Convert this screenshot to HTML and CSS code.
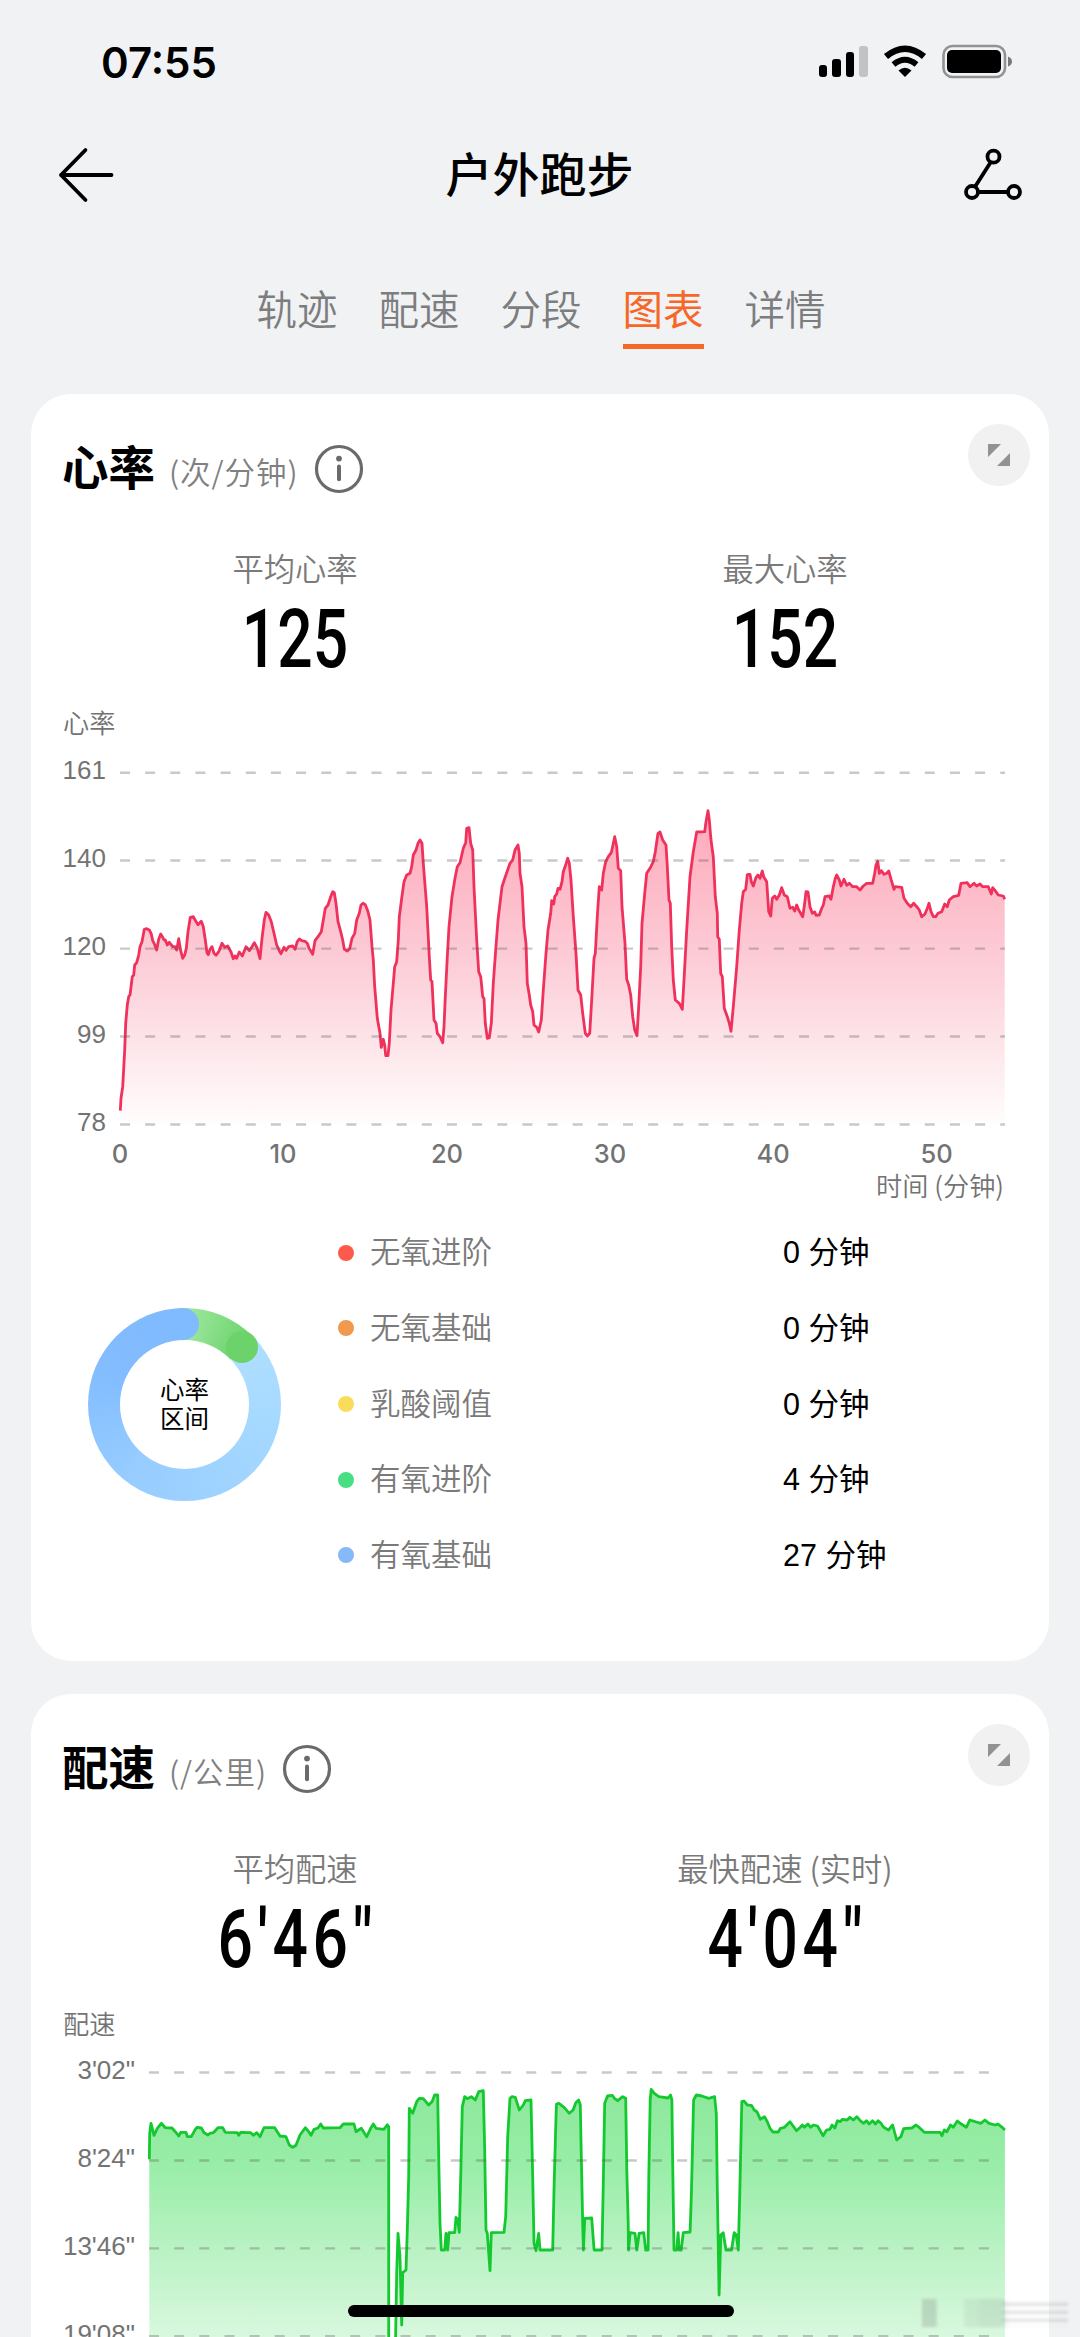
FILE: index.html
```html
<!DOCTYPE html>
<html lang="zh-CN">
<head>
    <meta charset="UTF-8">
    <title>户外跑步</title>
    <link rel="stylesheet" href="styles.css">
</head>
<body>
    <!-- Status bar -->
    <div class="status-bar">
        <span class="time">07:55</span>
        <svg class="status-icons" width="200" height="40" viewBox="816 42 200 40">
            <rect x="819" y="65" width="8" height="12" rx="3"/>
            <rect x="832" y="59" width="9" height="18" rx="3"/>
            <rect x="846" y="52" width="8" height="25" rx="3"/>
            <rect x="859" y="46" width="9" height="31" rx="3" fill="#c2c3c5"/>
            <path d="M905 77l-6.500-6.500q6.500-5.500 13 0z"/>
            <path d="M893.500 64.500q11.500-9.500 23 0" fill="none" stroke="#000" stroke-width="6"/>
            <path d="M886 56.500q19-15.500 38 0" fill="none" stroke="#000" stroke-width="6.500"/>
            <rect x="943.500" y="46" width="61.500" height="31" rx="9" fill="none" stroke="#919294" stroke-width="2.600"/>
            <rect x="947" y="50" width="54" height="23" rx="5"/>
            <path d="M1008 56.500q4 1.500 4 5t-4 5z" fill="#77787a"/>
        </svg>
    </div>

    <!-- Page header -->
    <div class="header">
        <svg class="icon-back" width="56" height="56" viewBox="0 0 56 56">
            <path d="M27.500 3L3 28l24.500 25M3 28h50.500"/>
        </svg>
        <h1>户外跑步</h1>
        <svg class="icon-share" width="62" height="56" viewBox="0 0 62 56">
            <circle cx="32.500" cy="9.700" r="6"/>
            <circle cx="11" cy="45" r="6"/>
            <circle cx="53" cy="45" r="6"/>
            <path d="M29.500 15.500L14.500 39M17 45h30"/>
        </svg>
    </div>

    <div class="tabs">
        <span class="tab">轨迹</span>
        <span class="tab">配速</span>
        <span class="tab">分段</span>
        <span class="tab active">图表</span>
        <span class="tab">详情</span>
    </div>

    <!-- Heart rate -->
    <div class="card heart">
        <div class="card-head">
            <h2>心率</h2>
            <span class="unit">(次/分钟)</span>
            <svg class="info" width="50" height="50" viewBox="0 0 50 50">
                <circle cx="25" cy="25" r="22.500"/>
                <circle class="dot" cx="25" cy="14.600" r="2.900"/>
                <path d="M25 22.500v12.800"/>
            </svg>
            <div class="expand">
                <svg width="22" height="22" viewBox="0 0 22 22"><path d="M0 0h13L0 13zM22 9v13H9z"/></svg>
            </div>
        </div>
        <div class="stats">
            <div class="stat">
                <div class="stat-label">平均心率</div>
                <div class="stat-value">125</div>
            </div>
            <div class="stat">
                <div class="stat-label">最大心率</div>
                <div class="stat-value">152</div>
            </div>
        </div>
        <svg class="chart" width="980" height="510" viewBox="50 700 980 510">
            <defs>
                <linearGradient id="heart-fill" gradientUnits="userSpaceOnUse" x1="0" y1="811" x2="0" y2="1125">
                    <stop offset="0" stop-color="#ffa9ba"/>
                    <stop offset="0.450" stop-color="#fccad5"/>
                    <stop offset="0.720" stop-color="#fde3e8"/>
                    <stop offset="1" stop-color="#fffdfd"/>
                </linearGradient>
            </defs>
            <text x="63" y="733" class="cjk">心率</text>
            <g id="heart-series" class="series"></g>
            <path class="grid" d="M120 772.700h885M120 860.500h885M120 948.600h885M120 1036.500h885M120 1124.500h885"/>
            <g class="y-labels">
                <text x="106" y="779">161</text>
                <text x="106" y="867">140</text>
                <text x="106" y="955">120</text>
                <text x="106" y="1043">99</text>
                <text x="106" y="1131">78</text>
            </g>
            <g class="x-labels">
                <text x="120" y="1163">0</text>
                <text x="283" y="1163">10</text>
                <text x="447" y="1163">20</text>
                <text x="610" y="1163">30</text>
                <text x="773" y="1163">40</text>
                <text x="936.500" y="1163">50</text>
            </g>
            <text x="1004" y="1196" class="cjk end">时间 (分钟)</text>
        </svg>
        <div class="zones">
            <div class="ring">
                <span class="cap cap-green"></span>
                <span class="cap cap-blue"></span>
                <div class="ring-text">心率<br>区间</div>
            </div>
            <div class="zone-list">
                <div class="zone"><i class="red"></i><span>无氧进阶</span><b>0 分钟</b></div>
                <div class="zone"><i class="orange"></i><span>无氧基础</span><b>0 分钟</b></div>
                <div class="zone"><i class="yellow"></i><span>乳酸阈值</span><b>0 分钟</b></div>
                <div class="zone"><i class="green"></i><span>有氧进阶</span><b>4 分钟</b></div>
                <div class="zone"><i class="blue"></i><span>有氧基础</span><b>27 分钟</b></div>
            </div>
        </div>
    </div>

    <!-- Pace -->
    <div class="card pace">
        <div class="card-head">
            <h2>配速</h2>
            <span class="unit">(/公里)</span>
            <svg class="info" width="50" height="50" viewBox="0 0 50 50">
                <circle cx="25" cy="25" r="22.500"/>
                <circle class="dot" cx="25" cy="14.600" r="2.900"/>
                <path d="M25 22.500v12.800"/>
            </svg>
            <div class="expand">
                <svg width="22" height="22" viewBox="0 0 22 22"><path d="M0 0h13L0 13zM22 9v13H9z"/></svg>
            </div>
        </div>
        <div class="stats">
            <div class="stat">
                <div class="stat-label">平均配速</div>
                <div class="stat-value">6'46"</div>
            </div>
            <div class="stat">
                <div class="stat-label">最快配速 (实时)</div>
                <div class="stat-value">4'04"</div>
            </div>
        </div>
        <svg class="chart" width="980" height="337" viewBox="50 2000 980 337">
            <defs>
                <linearGradient id="pace-fill" gradientUnits="userSpaceOnUse" x1="0" y1="2090" x2="0" y2="2425">
                    <stop offset="0" stop-color="#8ce89b"/>
                    <stop offset="0.220" stop-color="#98eda7"/>
                    <stop offset="0.480" stop-color="#baf2c4"/>
                    <stop offset="0.740" stop-color="#d9f8de"/>
                    <stop offset="1" stop-color="#fff"/>
                </linearGradient>
            </defs>
            <text x="63" y="2034" class="cjk">配速</text>
            <g id="pace-series" class="series"></g>
            <path class="grid" d="M149 2072.500h850M149 2160.500h850M149 2248.400h850M149 2336.300h850"/>
            <g class="y-labels">
                <text x="135" y="2079">3'02"</text>
                <text x="135" y="2167">8'24"</text>
                <text x="135" y="2255">13'46"</text>
                <text x="135" y="2343">19'08"</text>
            </g>
        </svg>
    </div>

    <div class="watermark"></div>
    <div class="home-indicator"></div>
    <script src="charts.js"></script>
</body>
</html>
```
FILE: styles.css
```css
* {
    box-sizing: border-box;
}

body {
    margin: 0;
    height: 2337px;
    overflow: hidden;
    position: relative;
    background-color: #f1f2f4;
    color: #000;
    font-family: "Noto Sans CJK SC", sans-serif;
}

h1, h2 {
    margin: 0;
}

/* Top of the page */
.status-bar {
    display: flex;
    justify-content: space-between;
    align-items: center;
    height: 124px;
    padding: 0 64px 0 101px;
}

.time {
    font-family: Inter, sans-serif;
    font-size: 42px;
    font-weight: 600;
}

.header {
    display: flex;
    justify-content: space-between;
    align-items: center;
    height: 102px;
    padding: 0 57px 0 58px;
}

.header h1 {
    padding: 0 0 7px 4px;
    font-size: 47px;
    line-height: 60px;
    font-weight: 500;
}

.icon-back, .icon-share {
    fill: none;
    stroke: #000;
    stroke-width: 3.8;
    stroke-linejoin: round;
    stroke-linecap: round;
}

.tabs {
    display: flex;
    justify-content: center;
    gap: 41px;
    height: 168px;
    padding: 54px 0 0 2px;
}

.tab {
    height: 69px;
    padding-top: 2px;
    font-size: 40.5px;
    line-height: 52px;
    font-weight: 350;
    color: #7c7d7f;
}

.tab.active {
    color: #f5682a;
    font-weight: 400;
    border-bottom: 5px solid #f5682a;
}

/* Cards */
.card {
    width: 1018px;
    margin: 0 31px 33px;
    padding: 30px 19px 0;
    border-radius: 40px;
    background-color: #fff;
}

.heart {
    height: 1267px;
}

.pace {
    margin-bottom: 0;
    border-radius: 40px 40px 0 0;
}

.card-head {
    display: flex;
    align-items: flex-start;
    height: 124px;
    padding-left: 12px;
}

.card-head h2 {
    margin-top: 11px;
    font-size: 46.5px;
    line-height: 60px;
    font-weight: 700;
}

.unit {
    margin: 26px 15px 0 14px;
    font-size: 30.5px;
    line-height: 42px;
    font-weight: 350;
    letter-spacing: 1px;
    color: #808080;
}

.info {
    margin-top: 20px;
    fill: none;
    stroke: #6a6a6a;
    stroke-width: 3.2;
    stroke-linecap: round;
}

.info path {
    stroke-width: 4;
}

.info .dot {
    fill: #6a6a6a;
    stroke: none;
}

.expand {
    display: flex;
    justify-content: center;
    align-items: center;
    width: 62px;
    height: 62px;
    margin-left: auto;
    border-radius: 50%;
    background-color: #f1f1f1;
}

.expand svg {
    fill: #929292;
}

.stats {
    display: flex;
    height: 152px;
}

.stat {
    flex: 1;
    text-align: center;
}

.stat-label {
    height: 46px;
    font-size: 31.3px;
    line-height: 40px;
    font-weight: 350;
    color: #7a7a7a;
}

.stat-value {
    font-family: Roboto, sans-serif;
    font-size: 81px;
    line-height: 92px;
    font-weight: 500;
    transform: scaleX(0.77);
}

.pace .stat-value {
    padding-left: 6px;
    letter-spacing: 6px;
}

/* Charts */
.chart {
    display: block;
}

.chart text {
    fill: #737373;
}

.cjk {
    font-size: 26.2px;
    font-weight: 350;
}

.end {
    text-anchor: end;
}

.y-labels {
    font-family: "Liberation Sans", sans-serif;
    font-size: 26px;
    text-anchor: end;
}

.x-labels {
    font-family: Inter, sans-serif;
    font-size: 25.5px;
    font-weight: 500;
    text-anchor: middle;
}

.grid {
    fill: none;
    stroke: rgba(90, 90, 90, 0.33);
    stroke-width: 2.4;
    stroke-dasharray: 10 15.15;
}

.series polyline {
    fill: none;
    stroke-width: 2.8;
    stroke-linejoin: round;
}

#heart-series polyline {
    stroke: #ef315b;
}

#heart-series polygon {
    fill: url(#heart-fill);
}

#pace-series polyline {
    stroke: #13c92f;
}

#pace-series polygon {
    fill: url(#pace-fill);
}

/* Heart rate zones */
.zones {
    display: flex;
    align-items: center;
    height: 388px;
    padding-left: 38px;
}

.ring {
    position: relative;
    display: flex;
    justify-content: center;
    align-items: center;
    width: 193px;
    height: 193px;
    border-radius: 50%;
    background: conic-gradient(#a0e8a1 0deg, #6bd36a 46deg, #aedfff 46deg, #a1d5ff 140deg, #96ccff 220deg, #83bdff 290deg, #80baff 360deg);
}

.ring-text {
    width: 129px;
    height: 129px;
    padding-top: 34px;
    border-radius: 50%;
    background-color: #fff;
    font-size: 24.5px;
    line-height: 29px;
    text-align: center;
}

.cap {
    position: absolute;
    width: 32px;
    height: 32px;
    border-radius: 50%;
}

.cap-green {
    top: 23.6px;
    left: 138.3px;
    background-color: #6bd36a;
}

.cap-blue {
    top: 0;
    left: 79px;
    background-color: #80baff;
}

.zone-list {
    margin-left: 57px;
}

.zone {
    display: flex;
    align-items: center;
    height: 75.7px;
    font-size: 30.5px;
}

.zone i {
    width: 16px;
    height: 16px;
    margin-right: 16px;
    border-radius: 50%;
}

.zone span {
    width: 413px;
    padding-bottom: 5px;
    font-weight: 350;
    color: #7a7a7a;
}

.zone b {
    padding-bottom: 5px;
    font-family: "Liberation Sans", "Noto Sans CJK SC", sans-serif;
    font-size: 30.5px;
    font-weight: 400;
}

.red { background-color: #fe5a4b; }
.orange { background-color: #f1994c; }
.yellow { background-color: #f9dc5c; }
.green { background-color: #47df81; }
.blue { background-color: #86b9f9; }

/* Overlays */
.home-indicator {
    position: absolute;
    left: 348px;
    bottom: 20px;
    width: 386px;
    height: 12px;
    border-radius: 6px;
    background-color: #000;
}

.watermark {
    position: absolute;
    right: 12px;
    bottom: 10px;
    width: 146px;
    height: 28px;
    background:
        repeating-linear-gradient(180deg, transparent 0 3px, rgba(130, 130, 135, 0.3) 5px, transparent 8px) right / 66px 28px no-repeat,
        linear-gradient(90deg, rgba(130, 140, 135, 0.3) 0 9%, transparent 11% 28%, rgba(130, 140, 135, 0.12) 30% 36%, rgba(130, 140, 135, 0.18) 42% 54%, transparent 60%);
    filter: blur(1.5px);
}
```
FILE: charts.js
```js
// Each point is "x,y"; three units are one pixel of the chart
const heart = `211,1112 213,1075 218,1040 224,930 227,850 232,795 236,770 240,765 247,710 251,705 254,675 260,668 266,645 270,620 276,605
283,568 290,566 298,570 304,582 308,602 314,614 320,630 326,598 332,582 338,592 342,600 346,600 352,615 358,607 368,620 375,620 380,630
386,596 392,632 398,655 404,645 409,625 414,575 421,532 430,530 437,543 444,554 454,544 460,560 466,600 471,638 475,644 480,628 486,620
492,640 498,646 506,635 516,610 524,622 533,618 543,636 550,656 555,648 560,655 568,636 577,648 588,620 598,632 606,620 613,608 622,625
630,656 636,595 643,540 648,517 656,525 664,545 672,580 680,615 688,632 693,641 702,622 708,631 716,620 728,618 735,628 742,605 748,597
755,602 765,604 772,610 777,625 782,632 788,643 795,602 804,590 814,575 820,540 826,505 834,495 842,470 848,455 853,458 858,490 864,545
872,575 878,600 883,628 892,633 899,626 906,595 914,580 920,540 928,520 933,495 939,490 946,494 953,512 960,540 966,620 970,660 974,740
982,835 990,880 994,922 1000,898 1004,915 1007,947 1014,947 1018,910 1023,810 1030,730 1034,680 1040,665 1045,600 1048,530 1055,475
1062,425 1070,405 1080,400 1085,380 1090,345 1098,330 1104,310 1110,300 1116,310 1120,370 1130,500 1138,650 1142,720 1146,725 1152,840
1158,850 1162,880 1170,890 1178,908 1182,860 1186,770 1192,650 1197,560 1206,470 1215,415 1222,380 1230,368 1240,325 1247,308 1250,265
1257,263 1262,310 1268,330 1272,440 1280,600 1286,695 1292,710 1298,770 1302,775 1306,850 1312,895 1318,893 1324,850 1330,730 1337,630
1344,540 1356,440 1366,410 1380,370 1388,360 1395,330 1404,315 1408,340 1410,400 1416,440 1422,560 1428,610 1432,730 1438,765 1442,795
1448,815 1452,855 1460,862 1466,876 1474,840 1480,750 1488,640 1494,570 1502,520`;

const heartSecondHalf = `35,482 41,492 44,470 50,462 54,445 60,448 66,425 70,395 78,372 83,355 88,370 93,420 100,530 108,640 114,750 122,765
128,820 136,880 142,888 149,880 155,780 162,655 166,640 172,530 178,440 185,450 190,400 197,365 205,350 214,338 219,315 224,290 230,320
235,385 242,392 246,500 255,610 260,718 266,735 272,765 278,830 284,870 291,887 296,800 302,680 306,550 314,460 320,400 330,385 340,365
346,335 354,280 360,276 368,300 378,315 382,380 387,480 391,490 395,620 400,720 406,780 418,790 427,808 432,720 440,570 450,410 460,335
470,276 494,275 498,245 504,212 508,240 513,300 520,350 526,470 532,520 533,590 538,598 542,700 547,710 553,805 562,830 568,850 573,874
580,800 590,680 598,570 605,490 610,455 617,448 622,404 630,403 634,425 640,438 648,412 654,405 660,415 667,393 671,410 680,425 686,515
692,528 697,475 704,468 710,478 718,465 725,443 733,465 742,470 750,505 758,502 764,513 770,495 776,510 788,530 794,490 798,455 804,456
810,500 817,520 824,516 828,526 838,525 845,505 850,495 855,470 868,468 873,478 880,440 886,415 890,405 898,420 903,438 912,418 920,436
928,430 938,440 950,440 960,450 970,438 980,430 998,430 1004,400 1008,375 1013,364 1018,400 1024,392 1032,403 1040,400 1046,393 1055,425
1062,448 1066,440 1085,442 1092,475 1102,490 1112,500 1121,490 1130,500 1138,510 1145,530 1155,522 1162,505 1167,490 1173,515 1180,530
1187,530 1194,520 1205,515 1214,492 1222,500 1228,480 1240,470 1256,466 1263,430 1282,428 1290,440 1302,430 1310,438 1320,432 1328,440
1345,440 1354,462 1358,443 1368,455 1375,465 1390,468 1394,478`;

const pace = `298,508 299,430 303,400 312,436 322,415 334,400 346,413 366,414 376,425 386,438 392,427 408,427 412,440 424,440 436,418 442,412
454,414 462,428 474,435 480,430 490,428 504,413 518,413 526,427 562,428 566,436 572,427 602,428 610,436 620,428 630,440 642,413 674,413
690,438 708,440 718,465 728,472 738,466 750,435 766,413 774,422 783,436 792,418 804,414 812,402 820,414 870,413 880,402 912,402 918,425
934,415 950,440 962,415 970,402 978,415 1002,418 1012,404 1016,410 1016,1200 1034,1200 1040,850 1044,730 1050,800 1055,1005 1058,848
1068,840 1072,720 1076,560 1078,355 1088,370 1100,335 1108,325 1120,326 1136,345 1146,335 1154,315 1163,315 1166,500 1170,700 1174,780
1184,780 1188,730 1193,780 1197,728 1214,728 1218,682 1223,688 1228,727 1232,560 1237,350 1244,320 1252,326 1264,320 1276,330 1286,305
1300,302 1304,480 1308,720 1312,730 1320,842 1324,728 1362,727 1367,680 1373,440 1380,325 1386,320 1396,322 1408,360 1420,345 1426,332
1443,330 1448,560 1452,760 1458,782 1466,730 1470,780 1508,780 1512,600 1518,380`;

const paceSecondHalf = `48,342 55,340 70,352 85,370 96,360 104,338 112,330 117,345 120,500 124,700 126,780 130,685 150,684 157,780 180,780
184,560 188,340 196,318 210,316 216,325 226,332 240,320 249,325 252,540 256,700 257,780 262,728 276,730 281,780 288,730 301,728 307,780
314,780 316,560 320,330 323,298 332,310 345,320 372,324 379,315 383,330 385,500 389,780 397,780 401,728 404,780 410,780 416,728 436,726
440,600 446,330 454,315 470,318 490,325 507,320 512,370 515,600 520,915 525,735 532,728 540,780 556,780 564,728 570,735 576,780 580,620
586,335 592,333 602,345 614,346 622,360 630,365 640,388 652,380 660,395 668,415 676,426 692,426 698,415 710,412 726,395 735,408 745,422
756,412 762,405 768,412 778,402 786,412 794,405 806,408 822,437 832,420 842,418 848,405 856,414 864,392 872,395 878,388 892,390 900,382
910,390 920,380 930,392 940,400 948,392 956,402 966,392 974,402 982,392 990,400 998,412 1012,420 1024,405 1036,450 1048,440 1056,416
1080,414 1092,405 1102,413 1116,427 1162,427 1167,437 1174,420 1182,425 1192,405 1200,412 1212,393 1220,400 1238,412 1248,390 1280,400
1292,390 1304,400 1322,405 1330,402 1342,412 1350,420`;

function toPoints(text, left, top, step) {
    return text.trim().split(/\s+/).map(pair => {
        const [x, y] = pair.split(',').map(Number);
        return [(left + x / step).toFixed(1), (top + y / 3).toFixed(1)];
    });
}

function drawSeries(id, points, bottom) {
    const line = points.join(' ');
    const first = points[0][0];
    const last = points[points.length - 1][0];
    document.getElementById(id).innerHTML =
        `<polygon points="${first},${bottom} ${line} ${last},${bottom}"/><polyline points="${line}"/>`;
}

drawSeries('heart-series', [
    ...toPoints(heart, 50, 740, 3),
    ...toPoints(heartSecondHalf, 540, 740, 3)
], 1124);

drawSeries('pace-series', [
    ...toPoints(pace, 50, 1990, 3),
    ...toPoints(paceSecondHalf, 540, 1990, 2.904)
], 2424);
```
